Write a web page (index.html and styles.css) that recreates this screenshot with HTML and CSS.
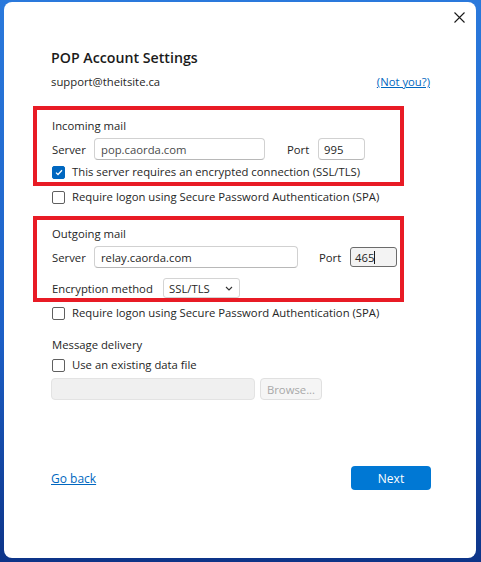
FILE: index.html
```html
<!DOCTYPE html>
<html lang="en">
<head>
    <meta charset="UTF-8">
    <meta name="viewport" content="width=device-width, initial-scale=1.0">
    <title>POP Account Settings</title>
    <link rel="stylesheet" href="styles.css">
</head>
<body>
    <div class="dialog">
        <button class="close" aria-label="Close">
            <svg width="11" height="11" viewBox="0 0 11 11"><path d="M0.5 0.5 L10.5 10.5 M10.5 0.5 L0.5 10.5" stroke="#1a1a1a" stroke-width="1.1" fill="none"/></svg>
        </button>

        <h1>POP Account Settings</h1>
        <div class="account">
            <span>support@theitsite.ca</span>
            <a href="#">(Not you?)</a>
        </div>

        <div class="group group-in">
            <div class="group-title">Incoming mail</div>
            <div class="row">
                <label class="lbl-server">Server</label>
                <input class="text server-in" type="text" value="pop.caorda.com">
                <label class="lbl-port">Port</label>
                <input class="text port" type="text" value="995">
            </div>
            <label class="check check-tight">
                <span class="box checked">
                    <svg width="8" height="7" viewBox="0 0 8 7"><path d="M1 3.6 L3 5.5 L7 1.3" stroke="#fff" stroke-width="1.3" fill="none"/></svg>
                </span>
                This server requires an encrypted connection (SSL/TLS)
            </label>
        </div>
        <label class="check spa-in">
            <span class="box"></span>
            Require logon using Secure Password Authentication (SPA)
        </label>

        <div class="group group-out">
            <div class="group-title">Outgoing mail</div>
            <div class="row">
                <label class="lbl-server">Server</label>
                <input class="text server-out" type="text" value="relay.caorda.com">
                <label class="lbl-port">Port</label>
                <div class="text port port-focus"><span>465</span><span class="caret"></span></div>
            </div>
            <div class="row enc-row">
                <label class="lbl-enc">Encryption method</label>
                <div class="select">
                    <span>SSL/TLS</span>
                    <svg width="8" height="5" viewBox="0 0 8 5"><path d="M1 1 L4 4 L7 1" stroke="#333" stroke-width="1.1" fill="none"/></svg>
                </div>
            </div>
        </div>
        <label class="check spa-out">
            <span class="box"></span>
            Require logon using Secure Password Authentication (SPA)
        </label>

        <div class="group-title delivery">Message delivery</div>
        <label class="check">
            <span class="box"></span>
            Use an existing data file
        </label>
        <div class="row file-row">
            <div class="file-input"></div>
            <button class="browse" disabled>Browse...</button>
        </div>

        <div class="footer">
            <a href="#">Go back</a>
            <button class="next">Next</button>
        </div>
    </div>
</body>
</html>
```

FILE: styles.css
```css
html, body {
    margin: 0;
}
body {
    width: 481px;
    height: 562px;
    padding: 2px 5px 4px 4px;
    box-sizing: border-box;
    background: linear-gradient(to bottom, #2a79dc 0%, #1c5fc6 60%, #0d3488 100%);
    font-family: 'Open Sans', 'Noto Sans', sans-serif;
    font-size: 11.3px;
    color: #262626;
    overflow: hidden;
}
.dialog {
    position: relative;
    height: 556px;
    background-color: #fff;
    border-radius: 8px;
    box-sizing: border-box;
    padding: 46px 45px 68px 47px;
    display: flex;
    flex-direction: column;
}
.close {
    position: absolute;
    top: 10px;
    right: 10px;
    width: 12px;
    height: 12px;
    padding: 0;
    border: none;
    background: none;
    display: flex;
}
h1 {
    margin: 0;
    font-size: 14.2px;
    font-weight: 600;
    line-height: 20px;
    color: #1b1b1b;
}
.account {
    margin-top: 5px;
    line-height: 18px;
    display: flex;
    justify-content: space-between;
}
.account a {
    margin-right: 1px;
}
a {
    color: #0067c0;
    text-decoration: underline;
}
.group {
    position: relative;
}
.group::after {
    content: '';
    position: absolute;
    left: -18px;
    right: 27px;
    border: 4px solid #e81b25;
    pointer-events: none;
}
.group-in {
    margin-top: 26px;
    padding-left: 1px;
}
.group-in::after {
    top: -11px;
    bottom: -6px;
}
.group-out {
    margin-top: 20px;
    padding-left: 1px;
}
.group-out::after {
    top: -9px;
    bottom: -4px;
}
.group-title {
    line-height: 18px;
}
.row {
    display: flex;
    align-items: center;
    margin-top: 3px;
}
.lbl-server {
    width: 42px;
}
.lbl-port {
    width: 31px;
}
.text {
    height: 22px;
    box-sizing: border-box;
    border: 1px solid #d1d1d1;
    border-bottom-color: #b8b8b8;
    border-radius: 4px;
    padding: 0 6px;
    font-family: inherit;
    font-size: 11.3px;
    color: #4a4a4a;
    background: #fff;
    outline: none;
}
.server-in {
    width: 171px;
    margin-right: 22px;
}
.server-out {
    width: 204px;
    margin-right: 21px;
    color: #262626;
}
.port {
    width: 47px;
    padding: 0 5px;
    color: #262626;
}
.port-focus {
    height: 20px;
    background: #f3f3f3;
    border: 1px solid #6b6b6b;
    border-radius: 3px;
    padding: 0 4px;
    display: flex;
    align-items: center;
}
.caret {
    width: 1px;
    height: 13px;
    background: #1a1a1a;
}
.enc-row {
    margin-top: 10px;
}
.lbl-enc {
    width: 111px;
}
.select {
    width: 77px;
    height: 20px;
    box-sizing: border-box;
    border: 1px solid #d4d4d4;
    border-radius: 3px;
    padding: 0 6px 0 5px;
    display: flex;
    align-items: center;
    justify-content: space-between;
}
.check {
    display: flex;
    align-items: center;
    gap: 7px;
    line-height: 16px;
    margin-top: 2px;
}
.check-tight {
    margin-top: 4px;
}
.box {
    width: 11px;
    height: 11px;
    border: 1px solid #5f5f5f;
    border-radius: 2px;
    box-sizing: content-box;
    display: flex;
    align-items: center;
    justify-content: center;
    flex-shrink: 0;
}
.box.checked {
    background: #0067c0;
    border-color: #0067c0;
}
.spa-in {
    margin-top: 9px;
    padding-left: 1px;
}
.spa-out {
    margin-top: 7px;
    padding-left: 1px;
}
.delivery {
    margin-top: 15px;
    padding-left: 1px;
}
.delivery + .check {
    margin-top: 3px;
    padding-left: 1px;
}
.file-row {
    margin-top: 5px;
    gap: 5px;
}
.file-input {
    width: 204px;
    height: 22px;
    box-sizing: border-box;
    background: #f0f0f0;
    border: 1px solid #e3e3e3;
    border-radius: 4px;
}
.browse {
    width: 62px;
    height: 22px;
    box-sizing: border-box;
    background: #f5f5f5;
    border: 1px solid #e0e0e0;
    border-radius: 4px;
    color: #a8a8a8;
    font-family: inherit;
    font-size: 11.3px;
    padding: 0;
}
.footer {
    margin-top: auto;
    display: flex;
    align-items: center;
    justify-content: space-between;
}
.footer a {
    font-size: 12px;
}
.next {
    width: 80px;
    height: 24px;
    border: none;
    border-radius: 4px;
    background: #0078d4;
    color: #fff;
    font-family: inherit;
    font-size: 12px;
    padding: 0;
}
```
